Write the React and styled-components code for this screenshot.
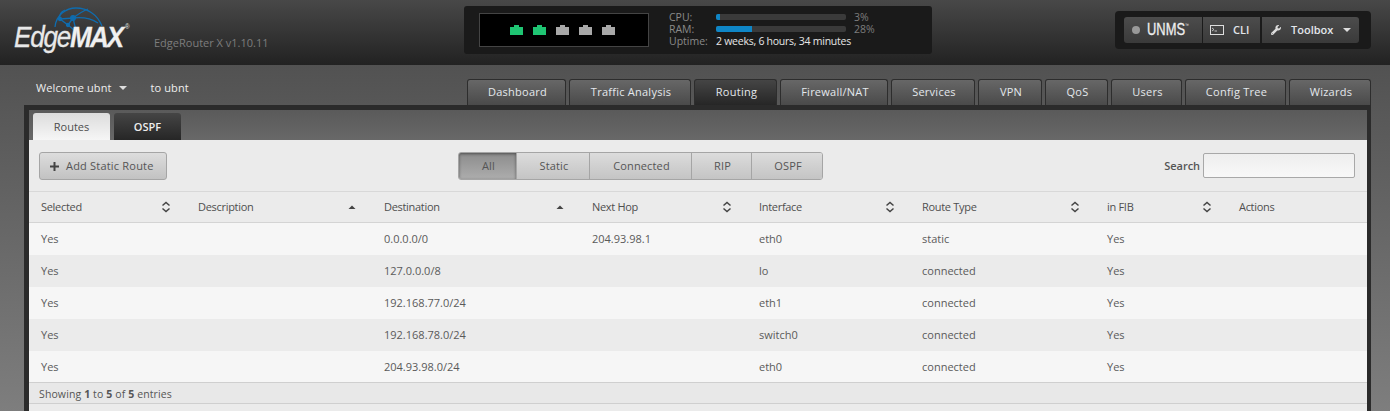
import React from "react";
import styled, { createGlobalStyle } from "styled-components";
import { FaWrench } from "react-icons/fa";

const Global = createGlobalStyle`
  html, body { margin: 0; padding: 0; height: 100%; }
  body { font-family: "Open Sans", "Noto Sans", sans-serif; font-size: 11px; overflow: hidden; background: #808080; }
`;
const Page = styled.div`
  width: 1390px; height: 411px; overflow: hidden; display: flex; flex-direction: column;
  background: linear-gradient(#525252, #868686) 0 65px no-repeat;
`;
const Header = styled.header`
  flex: none; height: 65px; display: flex; align-items: flex-start;
  background: linear-gradient(#484848, #222222);
`;
const Brand = styled.div`width: 154px; height: 65px; padding: 23px 0 0 14px; box-sizing: border-box; position: relative; flex: none;`;
const Logo = styled.div`
  position: relative; font-family: "Liberation Sans", Arial, sans-serif; font-style: italic; font-size: 30px; line-height: 28px;
  letter-spacing: -1.4px; color: #e8e8e8; white-space: nowrap; transform: scaleX(.87); transform-origin: left;
  -webkit-text-stroke: .3px #e8e8e8;
  b { font-weight: 700; color: #f0f0f0; letter-spacing: -2.2px; }
  sup { font-size: 7px; font-style: normal; vertical-align: 18px; line-height: 0; letter-spacing: 0; margin-left: 3px; -webkit-text-stroke: 0; }
`;
const Globe = styled.svg`position: absolute; left: 52px; top: 6px;`;
const Version = styled.div`margin-top: 36px; width: 310px; flex: none; color: #7d7d7d; font-size: 11px; line-height: 14px; letter-spacing: 0;`;
const Status = styled.div`
  flex: none; width: 468px; height: 48px; margin-top: 6px; background: #1a1a1a; border-radius: 3px;
  display: flex; align-items: flex-start; padding: 7px 0 0 15px; box-sizing: border-box;
`;
const Ports = styled.div`
  width: 170px; height: 34px; box-sizing: border-box; background: #000; border: 1px solid #444;
  display: flex; gap: 10px; justify-content: center; align-items: center; padding: 2px 3px 0 0; flex: none;
`;
const Port = styled.span`
  width: 13px; height: 8px; position: relative; display: block; background: ${p => p.$on ? "#1fc573" : "#a8a8a8"};
  &::before { content: ""; position: absolute; left: 4px; top: -2px; width: 5px; height: 2px; background: inherit; }
`;
const Stats = styled.div`
  margin-left: 20px; display: grid; grid-template-columns: 47px 130px auto; column-gap: 0;
  grid-auto-rows: 12px; line-height: 12px; color: #8a8a8a; font-size: 10.5px; margin-top: -2px; align-items: center;
`;
const Bar = styled.div`height: 6px; width: 130px; background: #3a3a3a; border-radius: 2px; overflow: hidden;`;
const Fill = styled.div`height: 100%; background: #0f86c6;`;
const Pct = styled.span`margin-left: 8px; color: #7d7d7d;`;
const Uptime = styled.span`grid-column: 2 / 4; color: #e6e6e6; letter-spacing: -.25px;`;
const ToolWrap = styled.div`
  flex: none; margin: 11px 0 0 183px; width: 256px; height: 38px; background: #1a1a1a; border-radius: 4px;
  padding: 6px 12px 0 9px; box-sizing: border-box; display: flex; gap: 1px;
`;
const ToolBtn = styled.div`
  width: ${p => p.$w}px; height: 26px; box-sizing: border-box; display: flex; align-items: center; gap: ${p => p.$gap || 8}px; padding: 0 0 1px ${p => p.$pl}px;
  margin-left: ${p => p.$ml || 0}px;
  background: linear-gradient(#4c4c4c, #3a3a3a); color: #e2e6ea; font-weight: 600; font-size: 11px; flex: none;
  border-radius: ${p => p.$r || "0"};
`;
const Dot = styled.span`width: 8px; height: 8px; border-radius: 50%; background: #999; flex: none;`;
const Unms = styled.span`
  font-family: "Liberation Sans", sans-serif; font-weight: 400; font-size: 17px; transform: scaleX(.76); transform-origin: left; color: #eee; position: relative; left: -1px;
  -webkit-text-stroke: .3px #eee; white-space: nowrap;
  sup { font-size: 5px; vertical-align: 8px; line-height: 0; -webkit-text-stroke: 0; }
`;
const Caret = styled.span`flex: none; width: 0; height: 0; border: 4px solid transparent; border-top: 4px solid ${p => p.$c || "#ddd"}; border-bottom: 0; display: inline-block;`;
const NavRow = styled.nav`
  flex: none; height: 40px; display: flex; align-items: flex-start; 
`;
const Welcome = styled.div`
  flex: none; width: 467px; padding: 16px 0 0 36px; box-sizing: border-box; display: flex; align-items: center; color: #eee; line-height: 14px; font-size: 11px; letter-spacing: .1px;
`;
const WelcomeName = styled.span`margin-right: 7px;`;
const ToUser = styled.span`margin-left: 24px;`;
const Tabs = styled.div`display: flex; gap: 3px; margin-top: 14px;`;
const Tab = styled.div`
  width: ${p => p.$w}px; height: 26px; box-sizing: border-box; border: 1px solid #2d2d2d; border-bottom: 0; border-radius: 3px 3px 0 0; padding: 0 0 2px 2px;
  display: flex; align-items: center; justify-content: center; color: #e4e8ec; font-size: 11px; font-weight: 500; letter-spacing: .25px;
  background: ${p => p.$active ? "linear-gradient(#454545, #262626)" : "linear-gradient(#676767, #4a4a4a)"};
`;
const Panel = styled.main`
  flex: 1; margin: 0 19px 0 24px; border: solid #2b2b2b; border-width: 5px 4px 0 5px; display: flex; flex-direction: column; min-height: 0;
`;
const SubBar = styled.div`
  flex: none; height: 30px; padding: 3px 0 0 4px; box-sizing: border-box; display: flex; gap: 4px;
  background: linear-gradient(#5a5a5a, #686868); 
`;
const SubTab = styled.div`
  width: ${p => p.$w}px; height: 27px; border-radius: 3px 3px 0 0; display: flex; align-items: center; justify-content: center; font-size: 11px; font-weight: ${p => p.$active ? 400 : 600};
  color: ${p => p.$active ? "#4d4d4d" : "#eee"};
  background: ${p => p.$active ? "linear-gradient(#dcdcdc, #f6f6f6)" : "linear-gradient(#454545, #262626)"};
`;
const Content = styled.div`flex: 1; background: #ebebeb; min-height: 0;`;
const Toolbar = styled.div`
  height: 52px; box-sizing: border-box; padding: 12px 12px 0 10px; display: flex; align-items: flex-start; border-bottom: 1px solid #d8d8d8;
`;
const Button = styled.div`
  width: 128px; height: 28px; box-sizing: border-box; border: 1px solid #a5a5a5; border-radius: 3px; background: linear-gradient(#dddddd, #c2c2c2);
  display: flex; align-items: center; padding: 0 0 2px 10px; gap: 7px; color: #555; font-size: 11px; font-weight: 500; flex: none; letter-spacing: .2px;
  svg { margin-top: 2px; }
`;
const Filter = styled.div`
  display: flex; margin-left: 291px; height: 28px; box-sizing: border-box; border: 1px solid #a5a5a5; border-radius: 3px; overflow: hidden; flex: none;
`;
const FilterBtn = styled.div`
  width: ${p => p.$w}px; box-sizing: border-box; display: flex; align-items: center; justify-content: center; font-size: 11px; font-weight: 500; color: #555; padding: 0 0 2px 2px; letter-spacing: .15px;
  background: ${p => p.$active ? "linear-gradient(#8c8c8c, #adadad)" : "linear-gradient(#dcdcdc, #c4c4c4)"};
  box-shadow: ${p => p.$active ? "inset 0 1px 3px rgba(0,0,0,.45)" : "none"};
  & + & { border-left: 1px solid #a5a5a5; }
`;
const SearchLabel = styled.label`margin-left: auto; display: flex; align-items: center; gap: 3px; color: #555; font-weight: 600; font-size: 11px; height: 26px; letter-spacing: -.05px;`;
const SearchInput = styled.input`
  width: 152px; height: 25px; box-sizing: border-box; border: 1px solid #a8a8a8; border-radius: 2px; background: linear-gradient(#eeeeee, #f8f8f8); padding: 0; outline: 0; margin-top: 1px;
`;
const Table = styled.table`width: 1338px; table-layout: fixed; border-collapse: separate; border-spacing: 0; font-size: 11px; color: #555;`;
const Th = styled.th`
  height: 31px; padding: 0 0 1px 12px; box-sizing: border-box; text-align: left; font-weight: 500; position: relative; color: #4f4f4f; letter-spacing: -.3px;
  border-bottom: 1px solid #d4d4d4; background: #ebebeb;
`;
const SortMark = styled.svg`position: absolute; right: 15px; top: 9px;`;
const Tr = styled.tr`background: ${p => p.$even ? "#ebebeb" : "#f6f6f6"};`;
const Td = styled.td`height: 32px; padding: 0 0 1px 12px; box-sizing: border-box; color: #5a5a5a;`;
const Footer = styled.div`
  height: 22px; margin-top: -1px; padding: 1px 0 0 10px; position: relative; box-sizing: border-box; border-top: 1px solid #cfcfcf; border-bottom: 1px solid #cfcfcf; line-height: 20px; color: #555; font-size: 10.5px; font-weight: 500; background: #e8e8e8; letter-spacing: .12px;
  b { font-weight: 700; }
`;

const Both = () => (
  <SortMark width="10" height="12" viewBox="0 0 10 12">
    <path d="M1.500 4.500 5 1.500l3.500 3M1.500 7.500 5 10.500l3.500-3" fill="none" stroke="#444" strokeWidth="1.500" />
  </SortMark>
);
const Up = () => (
  <SortMark width="10" height="12" viewBox="0 0 10 12">
    <path d="M1.500 8 5 4.500 8.500 8z" fill="#444" />
  </SortMark>
);

const columns = [
  ["Selected", 157, "both"], ["Description", 186, "up"], ["Destination", 208, "up"], ["Next Hop", 167, "both"],
  ["Interface", 163, "both"], ["Route Type", 185, "both"], ["in FIB", 132, "both"], ["Actions", 140, null],
];
const routes = [
  ["0.0.0.0/0", "204.93.98.1", "eth0", "static"],
  ["127.0.0.0/8", "", "lo", "connected"],
  ["192.168.77.0/24", "", "eth1", "connected"],
  ["192.168.78.0/24", "", "switch0", "connected"],
  ["204.93.98.0/24", "", "eth0", "connected"],
];
const tabs = [["Dashboard", 99], ["Traffic Analysis", 122], ["Routing", 83, true], ["Firewall/NAT", 108], ["Services", 84], ["VPN", 64], ["QoS", 63], ["Users", 71], ["Config Tree", 101], ["Wizards", 82]];
const filters = [["All", 57, true], ["Static", 73], ["Connected", 102], ["RIP", 60], ["OSPF", 71]];

export default function App() {
  return (
    <Page>
      <Global />
      <Header>
        <Brand>
          <Globe width="54" height="30" viewBox="0 0 54 30" fill="none" stroke="#0f6cae" strokeWidth="1.300">
            <path d="M3 21C4 9 14 2 24 2c11 0 21 6 26 18" />
            <path d="M8 13 21 12 16 19 8 13M21 12C25 9 31 5 36 3M21 12C30 11 40 13 46 17M16 19c3 2 6 5 8 8M21 12c1 5 2 9 4 14M8 13c-1-4 0-7 5-9" />
            <circle cx="21" cy="12" r="2.300" fill="#0f6cae" />
            <circle cx="8" cy="13" r="1.500" fill="#0f6cae" />
            <circle cx="16" cy="19" r="1.500" fill="#0f6cae" />
          </Globe>
          <Logo>Edge<b>MAX</b><sup>®</sup></Logo>
        </Brand>
        <Version>EdgeRouter X v1.10.11</Version>
        <Status>
          <Ports>
            <Port $on /><Port $on /><Port /><Port /><Port />
          </Ports>
          <Stats>
            <span>CPU:</span><Bar><Fill style={{ width: "3%" }} /></Bar><Pct>3%</Pct>
            <span>RAM:</span><Bar><Fill style={{ width: "28%" }} /></Bar><Pct>28%</Pct>
            <span>Uptime:</span><Uptime>2 weeks, 6 hours, 34 minutes</Uptime>
          </Stats>
        </Status>
        <ToolWrap>
          <ToolBtn $w={78} $pl={8} $r="3px 0 0 3px"><Dot /><Unms>UNMS<sup>™</sup></Unms></ToolBtn>
          <ToolBtn $w={57} $pl={7} $gap={9}>
            <svg width="14" height="10" viewBox="0 0 14 10" fill="none" stroke="#ddd"><rect x=".5" y=".5" width="13" height="9" /><path d="M2 3l2 1.500L2 6M4.500 6H7" strokeWidth=".8" /></svg>
            CLI
          </ToolBtn>
          <ToolBtn $w={97} $ml={1} $pl={9} $gap={10} $r="0 3px 3px 0"><FaWrench size={10} color="#ddd" />Toolbox<Caret /></ToolBtn>
        </ToolWrap>
      </Header>
      <NavRow>
        <Welcome><WelcomeName>Welcome ubnt</WelcomeName><Caret /><ToUser>to ubnt</ToUser></Welcome>
        <Tabs>
          {tabs.map(([t, w, a]) => <Tab key={t} $w={w} $active={a}>{t}</Tab>)}
        </Tabs>
      </NavRow>
      <Panel>
        <SubBar>
          <SubTab $w={77} $active>Routes</SubTab>
          <SubTab $w={67}>OSPF</SubTab>
        </SubBar>
        <Content>
          <Toolbar>
            <Button>
              <svg width="9" height="9" viewBox="0 0 9 9" fill="#444"><path d="M3.500 0h2v3.500H9v2H5.500V9h-2V5.500H0v-2h3.500z" /></svg>
              Add Static Route
            </Button>
            <Filter>
              {filters.map(([t, w, a]) => <FilterBtn key={t} $w={w} $active={a}>{t}</FilterBtn>)}
            </Filter>
            <SearchLabel>Search <SearchInput /></SearchLabel>
          </Toolbar>
          <Table>
            <colgroup>{columns.map(([c, w]) => <col key={c} width={w} />)}</colgroup>
            <thead>
              <tr>
                {columns.map(([c, , s]) => (
                  <Th key={c}>{c}{s === "both" && <Both />}{s === "up" && <Up />}</Th>
                ))}
              </tr>
            </thead>
            <tbody>
              {routes.map((r, i) => (
                <Tr key={r[0]} $even={i % 2 === 1}>
                  <Td>Yes</Td><Td /><Td>{r[0]}</Td><Td>{r[1]}</Td><Td>{r[2]}</Td><Td>{r[3]}</Td><Td>Yes</Td><Td />
                </Tr>
              ))}
            </tbody>
          </Table>
          <Footer>Showing <b>1</b> to <b>5</b> of <b>5</b> entries</Footer>
        </Content>
      </Panel>
    </Page>
  );
}
